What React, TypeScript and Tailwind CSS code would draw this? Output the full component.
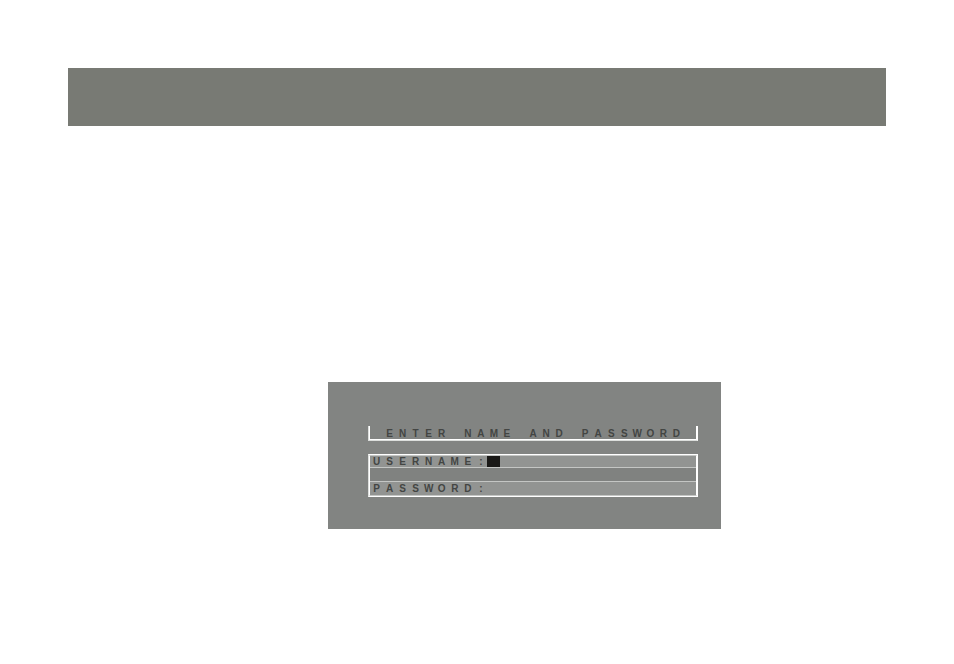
import { useState } from "react";
import type { FormEvent } from "react";

interface CellsProps {
  text: string;
}

// one character per terminal column
function Cells({ text }: CellsProps) {
  return (
    <>
      {text.split("").map((char, i) => (
        <span key={i} className="whitespace-pre text-center">{char}</span>
      ))}
    </>
  );
}

export default function App() {
  const [username, setUsername] = useState("");
  const [password, setPassword] = useState("");

  const handleSubmit = (e: FormEvent) => {
    e.preventDefault();
  };

  return (
    <div className="min-h-screen bg-white px-[68px] pt-[68px] font-['Liberation_Sans',Arial,sans-serif]">
      <header className="h-[58px] bg-[#787a74]" />

      <main className="mt-64 grid grid-cols-[260fr_393fr_165fr]">
        <section className="col-start-2 bg-[#828482] pt-11 pr-[23px] pb-8 pl-10 text-[10px] leading-3 font-bold text-[#434543]">
          <div className="border-x border-b border-l-[#dcdedc] border-r-white border-b-[#dcdedc]">
            <h1 className="grid h-3.5 grid-cols-[repeat(25,minmax(0,1fr))] border-x border-b border-white pt-0.5">
              <Cells text=" ENTER NAME AND PASSWORD" />
            </h1>
          </div>

          <form onSubmit={handleSubmit} className="mt-[13px] border border-white border-l-[#dcdedc]">
            <div className="border-x border-y border-x-white border-y-[#c4c6c4]">
              <div className="grid h-[11px] grid-cols-[repeat(25,minmax(0,1fr))] grid-rows-1 bg-[#929492]">
                <label htmlFor="username" className="col-span-9 grid grid-cols-9">
                  <Cells text="USERNAME:" />
                </label>
                <span className="h-[11px] bg-[#1a1917]" />
                <input
                  id="username"
                  value={username}
                  onChange={(e) => setUsername(e.target.value)}
                  className="col-span-15 h-[11px] w-full outline-none"
                />
              </div>
              <div className="h-[15px] border-y border-[#c4c6c4] bg-[#808280]" />
              <div className="grid h-[13px] grid-cols-[repeat(25,minmax(0,1fr))] items-end bg-[#929492]">
                <label htmlFor="password" className="col-span-9 grid grid-cols-9">
                  <Cells text="PASSWORD:" />
                </label>
                <input
                  id="password"
                  type="password"
                  value={password}
                  onChange={(e) => setPassword(e.target.value)}
                  className="col-span-16 h-[13px] w-full outline-none"
                />
              </div>
            </div>
          </form>
        </section>
      </main>
    </div>
  );
}
